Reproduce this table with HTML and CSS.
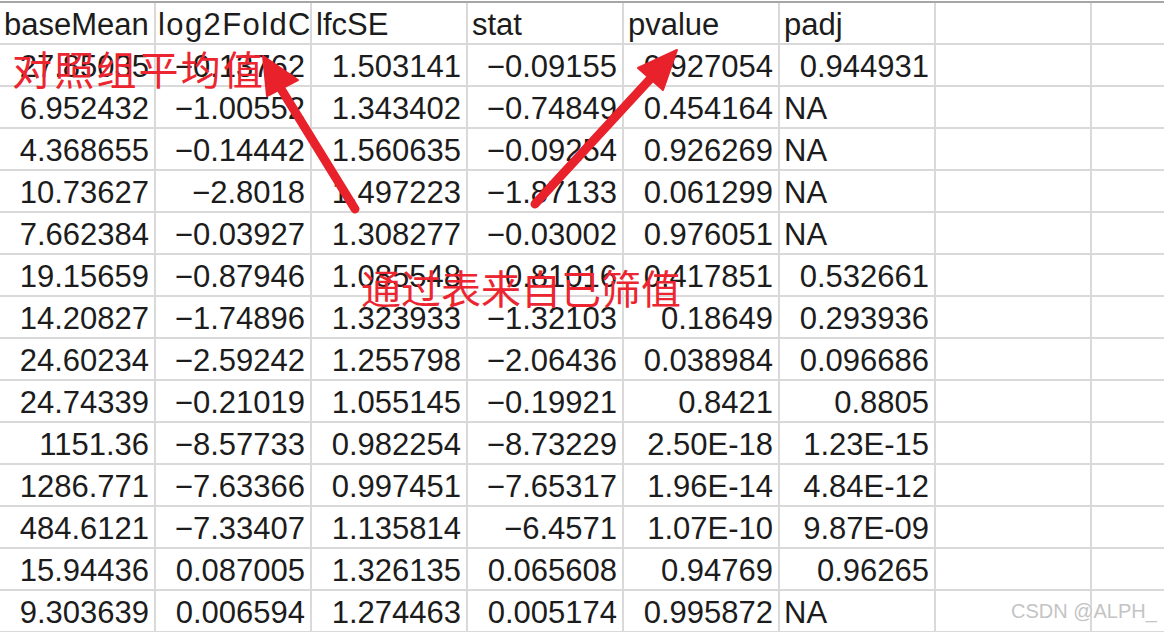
FILE: index.html
```html
<!DOCTYPE html>
<html lang="zh">
<head>
<meta charset="utf-8">
<title>DESeq2 结果表</title>
<link rel="stylesheet" href="styles.css">
</head>
<body>
<div class="sheet">
  <div class="grid">
    <div class="c">baseMean</div><div class="c clip">log2FoldChange</div><div class="c">lfcSE</div><div class="c">stat</div><div class="c">pvalue</div><div class="c">padj</div><div class="c"></div><div class="c"></div>

    <div class="c n">27.85035</div><div class="c n">−0.13762</div><div class="c n">1.503141</div><div class="c n">−0.09155</div><div class="c n">0.927054</div><div class="c n">0.944931</div><div class="c"></div><div class="c"></div>
    <div class="c n">6.952432</div><div class="c n">−1.00552</div><div class="c n">1.343402</div><div class="c n">−0.74849</div><div class="c n">0.454164</div><div class="c">NA</div><div class="c"></div><div class="c"></div>
    <div class="c n">4.368655</div><div class="c n">−0.14442</div><div class="c n">1.560635</div><div class="c n">−0.09254</div><div class="c n">0.926269</div><div class="c">NA</div><div class="c"></div><div class="c"></div>
    <div class="c n">10.73627</div><div class="c n">−2.8018</div><div class="c n">1.497223</div><div class="c n">−1.87133</div><div class="c n">0.061299</div><div class="c">NA</div><div class="c"></div><div class="c"></div>
    <div class="c n">7.662384</div><div class="c n">−0.03927</div><div class="c n">1.308277</div><div class="c n">−0.03002</div><div class="c n">0.976051</div><div class="c">NA</div><div class="c"></div><div class="c"></div>
    <div class="c n">19.15659</div><div class="c n">−0.87946</div><div class="c n">1.085548</div><div class="c n">−0.81016</div><div class="c n">0.417851</div><div class="c n">0.532661</div><div class="c"></div><div class="c"></div>
    <div class="c n">14.20827</div><div class="c n">−1.74896</div><div class="c n">1.323933</div><div class="c n">−1.32103</div><div class="c n">0.18649</div><div class="c n">0.293936</div><div class="c"></div><div class="c"></div>
    <div class="c n">24.60234</div><div class="c n">−2.59242</div><div class="c n">1.255798</div><div class="c n">−2.06436</div><div class="c n">0.038984</div><div class="c n">0.096686</div><div class="c"></div><div class="c"></div>
    <div class="c n">24.74339</div><div class="c n">−0.21019</div><div class="c n">1.055145</div><div class="c n">−0.19921</div><div class="c n">0.8421</div><div class="c n">0.8805</div><div class="c"></div><div class="c"></div>
    <div class="c n">1151.36</div><div class="c n">−8.57733</div><div class="c n">0.982254</div><div class="c n">−8.73229</div><div class="c n">2.50E-18</div><div class="c n">1.23E-15</div><div class="c"></div><div class="c"></div>
    <div class="c n">1286.771</div><div class="c n">−7.63366</div><div class="c n">0.997451</div><div class="c n">−7.65317</div><div class="c n">1.96E-14</div><div class="c n">4.84E-12</div><div class="c"></div><div class="c"></div>
    <div class="c n">484.6121</div><div class="c n">−7.33407</div><div class="c n">1.135814</div><div class="c n">−6.4571</div><div class="c n">1.07E-10</div><div class="c n">9.87E-09</div><div class="c"></div><div class="c"></div>
    <div class="c n">15.94436</div><div class="c n">0.087005</div><div class="c n">1.326135</div><div class="c n">0.065608</div><div class="c n">0.94769</div><div class="c n">0.96265</div><div class="c"></div><div class="c"></div>
    <div class="c n">9.303639</div><div class="c n">0.006594</div><div class="c n">1.274463</div><div class="c n">0.005174</div><div class="c n">0.995872</div><div class="c">NA</div><div class="c"></div><div class="c"></div>
  </div>

  <svg class="arrows" width="1164" height="632" viewBox="0 0 1164 632" aria-hidden="true">
    <g fill="#e8212b" stroke="#e8212b" stroke-linecap="round" stroke-linejoin="round">
      <line x1="355" y1="209" x2="278" y2="84" stroke-width="9"/>
      <polygon points="263,56 298,80 267,96" stroke-width="2"/>
      <line x1="535" y1="204" x2="652" y2="77" stroke-width="9"/>
      <polygon points="677,50 663,90 638,68" stroke-width="2"/>
    </g>
  </svg>

  <div class="note note-a">对照组平均值</div>
  <div class="note note-b">通过表来自已筛值</div>
  <div class="mark">CSDN @ALPH_</div>
</div>
</body>
</html>
```

FILE: styles.css
```css
html, body {
  margin: 0;
  padding: 0;
  background: #ffffff;
}

.sheet {
  position: relative;
  width: 1164px;
  height: 632px;
  overflow: hidden;
  padding-top: 1px;
  box-sizing: border-box;
}

.grid {
  display: grid;
  grid-template-columns: repeat(7, 154px) 1fr;
  grid-auto-rows: 40px;
  gap: 2px;
  padding-bottom: 2px;
  background: #d9d9d9;
  border-top: 2px solid #a6a6a6;
  font-family: "Liberation Sans", Arial, sans-serif;
  font-size: 31px;
  color: #1c1c1c;
}

.c {
  background: #ffffff;
  line-height: 44px;
  padding: 0 5px 0 4px;
  white-space: nowrap;
  overflow: hidden;
}

.clip {
  letter-spacing: 1.4px;
  padding-left: 2px;
}

.n {
  text-align: right;
}

.arrows {
  position: absolute;
  left: 0;
  top: 0;
}

.note {
  position: absolute;
  font-family: "Noto Sans CJK SC", "Noto Sans CJK JP", sans-serif;
  font-weight: 400;
  color: #ec2530;
  white-space: nowrap;
  line-height: 1;
}

.note-a {
  left: 12px;
  top: 48px;
  font-size: 40px;
  letter-spacing: 2.2px;
}

.note-b {
  left: 361px;
  top: 267px;
  font-size: 40px;
}

.mark {
  position: absolute;
  left: 1011px;
  top: 600px;
  font-family: "Liberation Sans", Arial, sans-serif;
  font-size: 20px;
  color: #c4c4c4;
  text-shadow: 0 0 1px #ffffff;
}
```
